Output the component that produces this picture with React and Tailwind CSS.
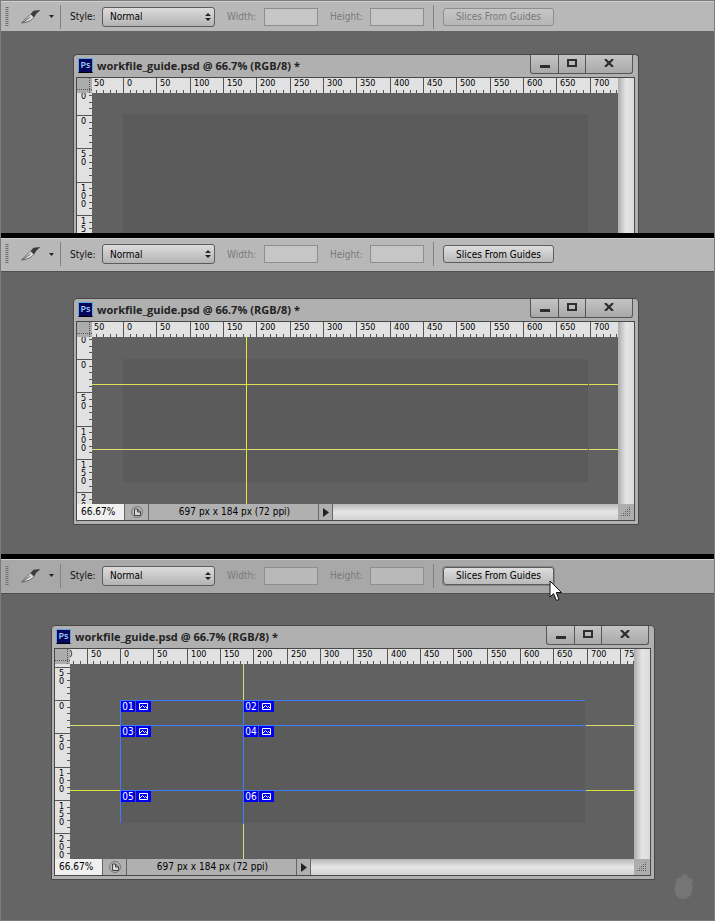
import React from "react";
import clsx from "clsx";

const SCALE = 2 / 3;

const FONT = "font-['DejaVu_Sans_Condensed','DejaVu_Sans',sans-serif]";

// one tick every 10 units, kept to those that fall on the ruler
const getTicks = (origin, length) => {
  const ticks = [];
  for (let unit = -100; unit <= 1000; unit += 10) {
    const pos = origin + Math.round(unit * SCALE);
    const major = unit % 50 === 0;
    if (pos > (major ? -18 : -1) && pos < length) {
      ticks.push({ unit, pos, major });
    }
  }
  return ticks;
};

const HorizontalRuler = ({ origin, length }) => (
  <svg className="block h-[15px] w-full min-w-0 flex-1 bg-[#e1e1e1]">
    {getTicks(origin, length).map(({ unit, pos, major }) => (
      <g key={unit}>
        <rect x={pos} y={major ? 0 : 12} width="1" height={major ? 15 : 3} fill="#555" />
        {major && (
          <text x={pos + 4} y="8" className={clsx("text-[9px]", FONT)} fill="#000">
            {Math.abs(unit)}
          </text>
        )}
      </g>
    ))}
  </svg>
);

const VerticalRuler = ({ origin, length }) => (
  <div className="relative w-[15px] shrink-0 overflow-hidden bg-[#e1e1e1]">
    <svg className="absolute inset-0 h-full w-full">
      {getTicks(origin, length).map(({ unit, pos, major }) => (
        <g key={unit}>
          <rect x={major ? 0 : 12} y={pos} width={major ? 15 : 3} height="1" fill="#555" />
          {major &&
            String(Math.abs(unit))
              .split("")
              .map((digit, i) => {
                const y = pos + 9 + i * 8;
                if (y < 1 || y > length + 6) return null;
                return (
                  <text key={i} x="4" y={y} className={clsx("text-[9px]", FONT)} fill="#000">
                    {digit}
                  </text>
                );
              })}
        </g>
      ))}
    </svg>
  </div>
);

const RulerCorner = () => (
  <svg className="block h-[15px] w-[15px] shrink-0 bg-[#acacac]">
    <path d="M12.5 0V15M0 11.5H15" stroke="#555" strokeDasharray="1 1" />
  </svg>
);

const Toolbar = ({ name, disabled, tone, pressed }) => (
  <form
    className={clsx(
      "flex items-center border-t border-t-[#cfcfcf] pl-1 text-[10px]",
      FONT,
      tone
    )}
  >
    <svg className="h-5 w-1 shrink-0" viewBox="0 0 4 20">
      <path d="M2 0V20" stroke="#6c6c6c" strokeWidth="3" strokeDasharray="1 1" />
    </svg>
    <button type="button" aria-label="Slice Select Tool" className="ml-3 flex items-center gap-2">
      <svg className="h-[14px] w-5" viewBox="0 0 20 14">
        <path d="M0.5 13L9 4.500L12.500 7.500C10.500 10.500 7.500 12 0.500 13Z" fill="#dedede" />
        <path d="M0.500 13L9 4.500M0.500 13C7.500 12 10.500 10.500 12.500 7.500M1 13L9.500 7" fill="none" stroke="#5a5a5a" strokeWidth="0.900" />
        <path d="M9.500 4L12.500 0.800L19.500 0L15.500 3.500L13 7.500Z" fill="#3c3c3c" />
      </svg>
      <svg className="h-[3px] w-[5px]" viewBox="0 0 5 3">
        <path d="M0 0H5L2.500 3Z" fill="#222" />
      </svg>
    </button>
    <span className="ml-1.5 h-6 w-px bg-[#828282]" />
    <label htmlFor={name + "-style"} className="ml-[9px] w-8 text-[#111]">
      Style:
    </label>
    <div className="relative">
      <select
        id={name + "-style"}
        defaultValue="Normal"
        className="block h-5 w-[113px] appearance-none rounded-[3px] border border-[#5c5c5c] bg-linear-to-b from-[#dcdcdc] to-[#b4b4b4] px-[7px] text-black"
      >
        <option>Normal</option>
        <option>Fixed Aspect Ratio</option>
        <option>Fixed Size</option>
      </select>
      <svg className="pointer-events-none absolute top-[6px] right-1 h-2 w-[6px]" viewBox="0 0 6 8">
        <path d="M0 3L3 0L6 3ZM0 5H6L3 8Z" fill="#222" />
      </svg>
    </div>
    <label htmlFor={name + "-width"} className="ml-3 w-[37px] text-[#7a7a7a]">
      Width:
    </label>
    <input
      id={name + "-width"}
      disabled
      className="h-[18px] w-[54px] border border-[#8e8e8e] bg-white/20"
    />
    <label htmlFor={name + "-height"} className="ml-3 w-10 text-[#7a7a7a]">
      Height:
    </label>
    <input
      id={name + "-height"}
      disabled
      className="h-[18px] w-[54px] border border-[#8e8e8e] bg-white/20"
    />
    <span className="ml-[9px] h-6 w-px bg-[#828282]" />
    <button
      type="button"
      disabled={disabled}
      className={clsx(
        "ml-[9px] h-[18px] w-[111px] rounded-[3px] border bg-linear-to-b whitespace-nowrap",
        disabled
          ? "border-[#8e8e8e] from-[#c6c6c6] to-[#b6b6b6] text-[#7a7a7a]"
          : "border-[#5c5c5c] from-[#dedede] to-[#bababa] text-black",
        pressed && "ring-1 ring-[#858585]"
      )}
    >
      Slices From Guides
    </button>
  </form>
);

const TitleBar = () => (
  <div className="flex h-[22px] items-start">
    <span className="mt-[3px] ml-1 h-[15px] w-[15px] border border-[#5fa5e8] border-b-black bg-[#06065a] text-center font-['Open_Sans',sans-serif] text-[9px] leading-3 font-semibold text-[#9fd0ff]">
      Ps
    </span>
    <h2 className="mt-[3px] ml-1 flex-1 truncate font-['Open_Sans',sans-serif] text-[11px] leading-4 font-bold text-[#222]">
      workfile_guide.psd @ 66.7% (RGB/8) *
    </h2>
    <div className="mr-[5px] flex h-[19px] divide-x divide-[#555] rounded-b-[3px] border border-t-0 border-[#555] bg-linear-to-b from-[#c4c4c4] to-[#a9a9a9]">
      <button type="button" aria-label="Minimize" className="flex w-7 justify-center">
        <span className="mt-[10px] h-[3px] w-[10px] bg-[#2e2e2e]" />
      </button>
      <button type="button" aria-label="Maximize" className="flex w-[27px] justify-center">
        <span className="mt-1 h-2 w-[10px] border-2 border-[#2e2e2e]" />
      </button>
      <button type="button" aria-label="Close" className="flex w-[46px] justify-center">
        <svg className="mt-1 h-2 w-[10px]" viewBox="0 0 10 8">
          <path d="M1 0L9 8M9 0L1 8" stroke="#2e2e2e" strokeWidth="2.200" />
        </svg>
      </button>
    </div>
  </div>
);

const StatusBar = () => (
  <div className={clsx("flex h-4 text-[10px] leading-4 text-black", FONT)}>
    <span className="w-[47px] bg-[#f0f0f0] pl-1">66.67%</span>
    <span className="flex w-[25px] items-center justify-center border-x border-[#666]">
      <svg className="h-3 w-3" viewBox="0 0 12 12">
        <circle cx="6" cy="6" r="5.500" fill="#b4b4b4" stroke="#777" />
        <path d="M3.500 3H6.500L9.500 6V9.500H3.500ZM6.500 3V6H9.500" fill="#d8d8d8" stroke="#444" />
      </svg>
    </span>
    <span className="w-[170px] border-r border-[#666] pl-0.5 text-center whitespace-nowrap">
      697 px x 184 px (72 ppi)
    </span>
    <button type="button" aria-label="Status options" className="flex w-[14px] items-center justify-center border-r border-[#666]">
      <svg className="h-[9px] w-[6px]" viewBox="0 0 6 9">
        <path d="M0 0L6 4.500L0 9Z" fill="#222" />
      </svg>
    </button>
    <span className="flex-1 bg-linear-to-b from-[#b8b8b8] via-[#e6e6e6] to-[#d2d2d2]" />
    <svg className="h-4 w-4 bg-[#adadad]" viewBox="0 0 16 16">
      {[0, 1, 2, 3, 4].map((row) => (
        <path
          key={row}
          d={`M${11 - row * 2} ${3.5 + row * 2}H13`}
          stroke="#5f5f5f"
          strokeDasharray="1 1"
        />
      ))}
    </svg>
  </div>
);

const PsdWindow = ({ originX, originY, lengthX, lengthY, canvas, open, children }) => (
  <div
    className={clsx(
      "rounded-t-[4px] border border-[#484848] bg-[#b0b0b0]",
      open && "rounded-b-none border-b-0"
    )}
  >
    <TitleBar />
    <div
      className={clsx(
        "mr-[3px] ml-[2px] border border-[#484848]",
        open ? "border-b-0" : "mb-[3px]"
      )}
    >
      <div className="flex">
        <div className="flex min-w-0 flex-1 flex-col">
          <div className="flex">
            <RulerCorner />
            <HorizontalRuler origin={originX} length={lengthX} />
          </div>
          <div className={clsx("flex", canvas)}>
            <VerticalRuler origin={originY} length={lengthY} />
            <div className="relative min-w-0 flex-1 overflow-hidden bg-[#616161]">{children}</div>
          </div>
        </div>
        <div className="w-4 bg-linear-to-r from-[#adadad] via-[#e6e6e6] to-[#dadada]" />
      </div>
      {!open && <StatusBar />}
    </div>
  </div>
);

const SLICES = [
  { id: "01", pos: "top-[37px] left-[51px]" },
  { id: "02", pos: "top-[37px] left-[174px]" },
  { id: "03", pos: "top-[62px] left-[51px]" },
  { id: "04", pos: "top-[62px] left-[174px]" },
  { id: "05", pos: "top-[127px] left-[51px]" },
  { id: "06", pos: "top-[127px] left-[174px]" },
];

const SliceBadge = ({ id, pos }) => (
  <div className={clsx("absolute flex h-[11px] gap-px text-white", pos)}>
    <span className={clsx("w-[14px] bg-[#0000f0] text-center text-[10px] leading-[11px]", FONT)}>{id}</span>
    <span className="flex w-[15px] items-center justify-center bg-[#0000f0]">
      <svg className="h-[7px] w-[9px]" viewBox="0 0 9 7">
        <path d="M0.500 0.500H8.500V6.500H0.500ZM1 5L3.500 2.500L5.500 4.500L6.500 3.500L8 5" fill="none" stroke="#fff" />
      </svg>
    </span>
  </div>
);

const App = () => {
  return (
    <main className="relative min-h-screen overflow-hidden border border-[#7c7c7c] bg-[#656565]">
      <section>
        <Toolbar name="first" disabled tone="h-[30px] bg-[#b8b8b8]" />
        <div className="mr-[75px] ml-[72px] pt-[23px]">
          <PsdWindow originX={31} originY={22} lengthX={526} lengthY={140} canvas="h-[140px]" open>
            <div className="absolute top-[21px] left-[31px] h-[123px] w-[465px] bg-[#5b5b5b]" />
          </PsdWindow>
        </div>
      </section>

      <section className="border-t-5 border-black">
        <Toolbar name="second" tone="h-[34px] border-b border-b-[#505050] bg-[#b8b8b8] pb-0.5" />
        <div className="mr-[75px] ml-[72px] pt-[26px] pb-[29px]">
          <PsdWindow originX={31} originY={22} lengthX={526} lengthY={167} canvas="h-[167px]">
            <div className="absolute top-[22px] left-[31px] h-[123px] w-[465px] bg-[#5b5b5b]" />
            <div className="absolute top-[47px] h-px w-full bg-[#dde052]" />
            <div className="absolute top-[112px] h-px w-full bg-[#dde06c]" />
            <div className="absolute left-[154px] h-full w-px bg-[#e6e63c]" />
            <div className="absolute top-[22px] left-[496px] h-[123px] w-px bg-[#616161]" />
          </PsdWindow>
        </div>
      </section>

      <section className="border-t-5 border-black">
        <Toolbar name="third" pressed tone="h-[35px] border-b border-b-[#505050] bg-[#a8a8a8] pb-0.5" />
        <div className="mr-[59px] ml-[50px] pt-[31px] pb-10">
          <PsdWindow originX={50} originY={36} lengthX={564} lengthY={195} canvas="h-[195px]">
            <div className="absolute top-[61px] h-px w-full bg-[#dddc70]" />
            <div className="absolute top-[126px] h-px w-full bg-[#d8e23c]" />
            <div className="absolute left-[173px] h-full w-px bg-[#dddc80]" />
            <div className="absolute top-[36px] left-[50px] h-[123px] w-[465px] border-t border-l border-[#3d7bff] bg-[#5b5b5b]" />
            <div className="absolute top-[61px] left-[50px] h-px w-[466px] bg-[#3d7bff]" />
            <div className="absolute top-[126px] left-[50px] h-px w-[466px] bg-[#3d7bff]" />
            <div className="absolute top-[36px] left-[173px] h-[124px] w-px bg-[#3d7bff]" />
            {SLICES.map((slice) => (
              <SliceBadge key={slice.id} id={slice.id} pos={slice.pos} />
            ))}
          </PsdWindow>
        </div>
      </section>

      <svg className="absolute top-[579px] left-[548px] h-[22px] w-[14px]" viewBox="0 0 14 22">
        <path d="M1 1V17L4.500 13.500L7.500 20.500L10 19.500L7.300 12.500H12.500Z" fill="#fff" stroke="#111" />
      </svg>
      <svg className="absolute right-[20px] bottom-[20px] h-[27px] w-5" viewBox="0 0 20 27">
        <path d="M11 0L15 5L20 7L17.500 9C20 15 18 26 9 26C-1 26 -1 12 3 8L2 6L7 4Z" fill="#757575" />
      </svg>
    </main>
  );
};

export default App;
